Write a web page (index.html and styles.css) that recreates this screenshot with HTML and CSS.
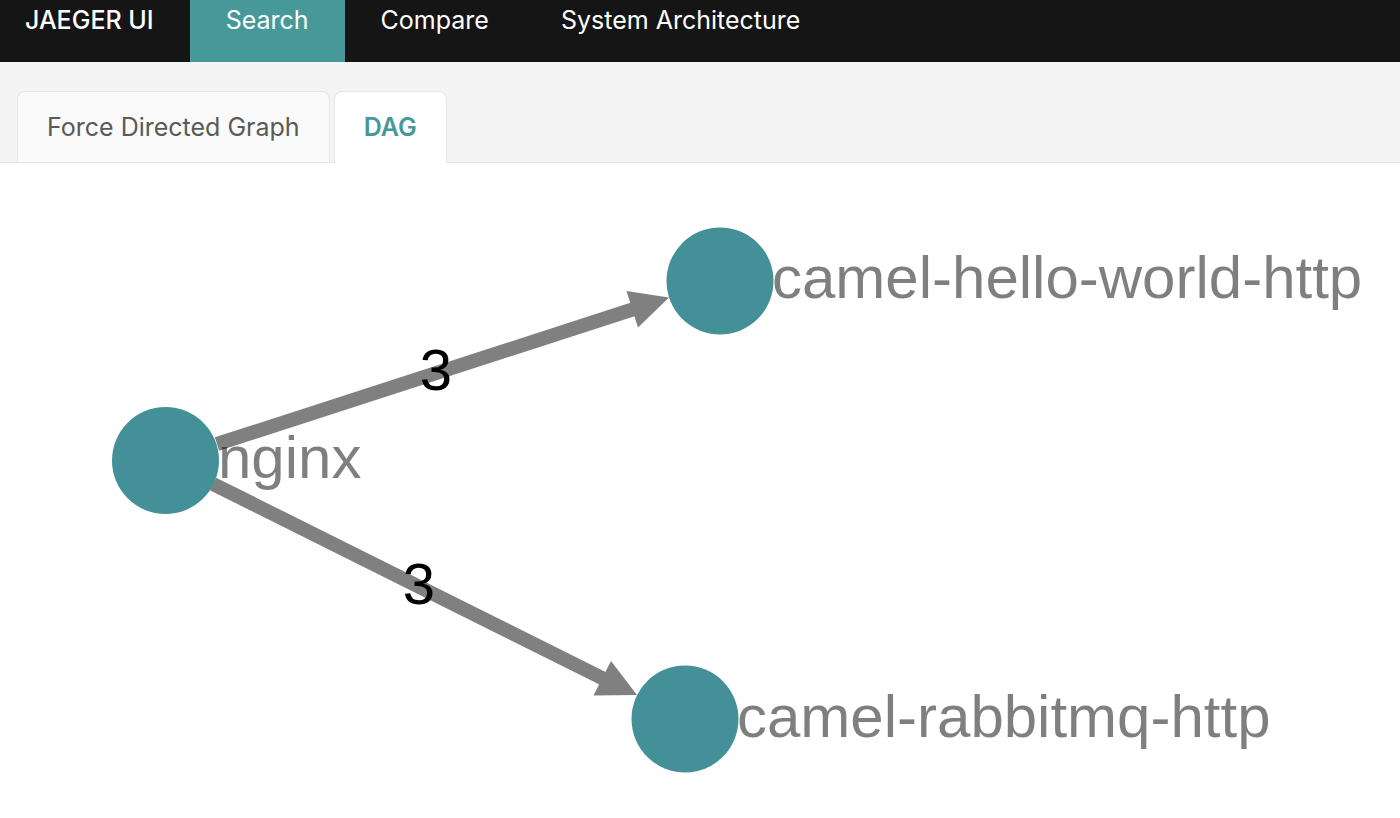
FILE: index.html
```html
<!DOCTYPE html>
<html lang="en">
<head>
<meta charset="utf-8">
<title>Jaeger UI</title>
<link rel="stylesheet" href="styles.css">
</head>
<body>
<header>
  <nav class="nav">
    <a class="nav-link brand" href="#">JAEGER UI</a>
    <a class="nav-link active" href="#">Search</a>
    <a class="nav-link" href="#">Compare</a>
    <a class="nav-link" href="#">System Architecture</a>
  </nav>
</header>
<div class="tabs" role="tablist">
  <button class="tab" type="button" role="tab" aria-selected="false">Force Directed Graph</button>
  <button class="tab selected" type="button" role="tab" aria-selected="true">DAG</button>
</div>
<main>
  <svg class="graph" viewBox="0 0 1400 655" role="img" aria-label="Service dependency graph">
    <g class="edges">
      <path d="M217 281L634 146"/>
      <path d="M213 321L604 516"/>
    </g>
    <g class="arrows">
      <path d="M669 134.500L626.500 128L638 164.500Z"/>
      <path d="M637 532L611 498L593.500 532.500Z"/>
    </g>
    <g class="nodes">
      <circle cx="165.500" cy="297.500" r="53.500"/>
      <circle cx="720" cy="118" r="53.500"/>
      <circle cx="685" cy="556" r="53.500"/>
    </g>
    <g class="labels">
      <text x="218" y="315">nginx</text>
      <text x="772" y="135">camel-hello-world-http</text>
      <text x="737" y="574">camel-rabbitmq-http</text>
    </g>
    <g class="counts">
      <text x="436" y="227">3</text>
      <text x="419" y="441">3</text>
    </g>
  </svg>
</main>
</body>
</html>
```
FILE: styles.css
```css
* {
  box-sizing: border-box;
}

body {
  margin: 0;
  background: #fff;
  font-family: Inter, "Liberation Sans", sans-serif;
  font-size: 25px;
}

.nav {
  display: flex;
  background: #151515;
}

.nav-link {
  padding: 0 36px 22px;
  color: #fff;
  line-height: 40px;
  text-decoration: none;
}

.brand {
  padding-left: 25px;
  font-weight: 500;
}

.nav-link.active {
  background: #479898;
}

.tabs {
  display: flex;
  gap: 4px;
  padding: 29px 17px 0;
  background: #f4f4f4;
  border-bottom: 1px solid #e6e6e6;
}

.tab {
  padding: 15px 29px;
  border: 1px solid #e6e6e6;
  border-bottom: 0;
  border-radius: 8px 8px 0 0;
  background: #fafafa;
  color: #595959;
  font: inherit;
  line-height: 40px;
}

.tab.selected {
  margin-bottom: -1px;
  padding-bottom: 16px;
  background: #fff;
  color: #479898;
  font-weight: 600;
}

.graph {
  display: block;
  width: 100%;
  height: auto;
  font-family: "Liberation Sans", Arial, sans-serif;
  font-size: 60px;
}

.edges {
  fill: none;
  stroke: #808080;
  stroke-width: 14px;
}

.arrows {
  fill: #808080;
}

.nodes {
  fill: #439098;
}

.labels {
  fill: rgba(0, 0, 0, 0.5);
}

.counts {
  fill: #000;
  font-size: 58px;
  text-anchor: middle;
}
```
